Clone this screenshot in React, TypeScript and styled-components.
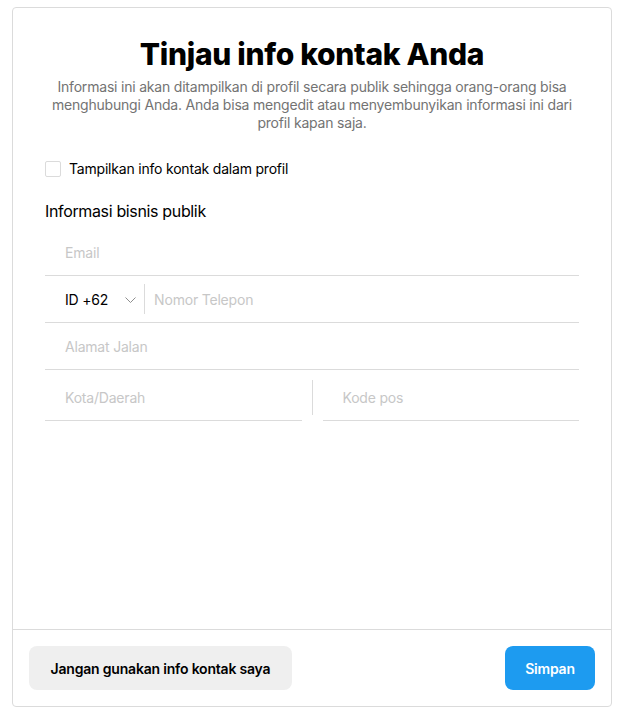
import React from 'react'
import styled, { createGlobalStyle } from 'styled-components'

const GlobalStyle = createGlobalStyle`
  * { box-sizing: border-box; }
  body {
    margin: 0;
    background: #fff;
    font-family: Inter, "Noto Sans", sans-serif;
    color: #000;
  }
`

const App = () => {
  return (
    <>
      <GlobalStyle />
      <Page>
        <Card>
          <Body>
            <Title>Tinjau info kontak Anda</Title>
            <Subtitle>
              Informasi ini akan ditampilkan di profil secara publik sehingga orang-orang bisa
              menghubungi Anda. Anda bisa mengedit atau menyembunyikan informasi ini dari
              profil kapan saja.
            </Subtitle>
            <CheckRow>
              <CheckBox />
              <CheckLabel>Tampilkan info kontak dalam profil</CheckLabel>
            </CheckRow>
            <SectionTitle>Informasi bisnis publik</SectionTitle>
            <Fields>
              <FieldRow>
                <TextInput placeholder="Email" />
              </FieldRow>
              <FieldRow>
                <CountrySelect>
                  ID +62
                  <svg width="11" height="6" viewBox="0 0 11 6" fill="none">
                    <path d="M0.5 0.5L5.5 5.5L10.5 0.5" stroke="#8e8e8e" strokeWidth="1" />
                  </svg>
                </CountrySelect>
                <Divider />
                <TextInput placeholder="Nomor Telepon" $inset={9} />
              </FieldRow>
              <FieldRow>
                <TextInput placeholder="Alamat Jalan" />
              </FieldRow>
              <SplitRow>
                <HalfField>
                  <TextInput placeholder="Kota/Daerah" />
                </HalfField>
                <SplitDivider />
                <HalfField>
                  <TextInput placeholder="Kode pos" />
                </HalfField>
              </SplitRow>
            </Fields>
          </Body>
          <Footer>
            <SecondaryButton>Jangan gunakan info kontak saya</SecondaryButton>
            <PrimaryButton>Simpan</PrimaryButton>
          </Footer>
        </Card>
      </Page>
    </>
  )
}

export default App

const Page = styled.div`
  padding: 7px 0 0 12px;
`

const Card = styled.div`
  width: 600px;
  height: 700px;
  border: 1px solid #dbdbdb;
  border-radius: 4px;
  display: flex;
  flex-direction: column;
`

const Body = styled.div`
  flex: 1;
  padding: 28px 32px 0 32px;
  display: flex;
  flex-direction: column;
  letter-spacing: -0.2px;
`

const Title = styled.h1`
  margin: 0;
  font-size: 30px;
  line-height: 36px;
  font-weight: 800;
  text-align: center;
  letter-spacing: -0.3px;
`

const Subtitle = styled.p`
  margin: 6px 0 0 0;
  font-size: 14px;
  line-height: 18px;
  color: #737373;
  text-align: center;
`

const CheckRow = styled.label`
  display: flex;
  align-items: center;
  gap: 8px;
  margin-top: 28px;
`

const CheckBox = styled.span`
  width: 16px;
  height: 16px;
  border: 1px solid #dbdbdb;
  border-radius: 2px;
  flex-shrink: 0;
`

const CheckLabel = styled.span`
  font-size: 14px;
  line-height: 18px;
`

const SectionTitle = styled.h2`
  margin: 23px 0 0 0;
  font-size: 16px;
  line-height: 20px;
  font-weight: 400;
  letter-spacing: -0.35px;
`

const Fields = styled.div`
  display: flex;
  flex-direction: column;
  margin-top: 8px;
`

const FieldRow = styled.div`
  display: flex;
  align-items: center;
  height: 47px;
  border-bottom: 1px solid #dbdbdb;
`

const TextInput = styled.input<{ $inset?: number }>`
  flex: 1;
  min-width: 0;
  border: none;
  outline: none;
  background: transparent;
  font-family: inherit;
  font-size: 14px;
  letter-spacing: -0.2px;
  color: #000;
  padding: 0 0 0 ${(p) => p.$inset ?? 20}px;
  &::placeholder {
    color: #c7c7c7;
  }
`

const CountrySelect = styled.div`
  display: flex;
  align-items: center;
  gap: 17px;
  padding: 0 8px 0 20px;
  font-size: 14px;
  svg {
    margin-top: 1px;
  }
`

const Divider = styled.span`
  width: 1px;
  height: 30px;
  background: #dbdbdb;
`

const SplitRow = styled.div`
  display: grid;
  grid-template-columns: 1fr 21px 1fr;
  height: 51px;
`

const HalfField = styled.div`
  display: flex;
  align-items: center;
  padding-top: 5px;
  border-bottom: 1px solid #dbdbdb;
`

const SplitDivider = styled.span`
  justify-self: center;
  width: 1px;
  height: 35px;
  margin-top: 10px;
  background: #dbdbdb;
`

const Footer = styled.div`
  display: flex;
  justify-content: space-between;
  padding: 16px;
  border-top: 1px solid #dbdbdb;
`

const ButtonBase = styled.button`
  height: 44px;
  border: none;
  border-radius: 8px;
  font-family: inherit;
  font-size: 14px;
  font-weight: 600;
  letter-spacing: -0.2px;
  white-space: nowrap;
  padding: 0 16px;
  cursor: pointer;
`

const SecondaryButton = styled(ButtonBase)`
  width: 263px;
  background: #efefef;
  color: #000;
`

const PrimaryButton = styled(ButtonBase)`
  width: 90px;
  background: #1d9bf0;
  color: #fff;
`
